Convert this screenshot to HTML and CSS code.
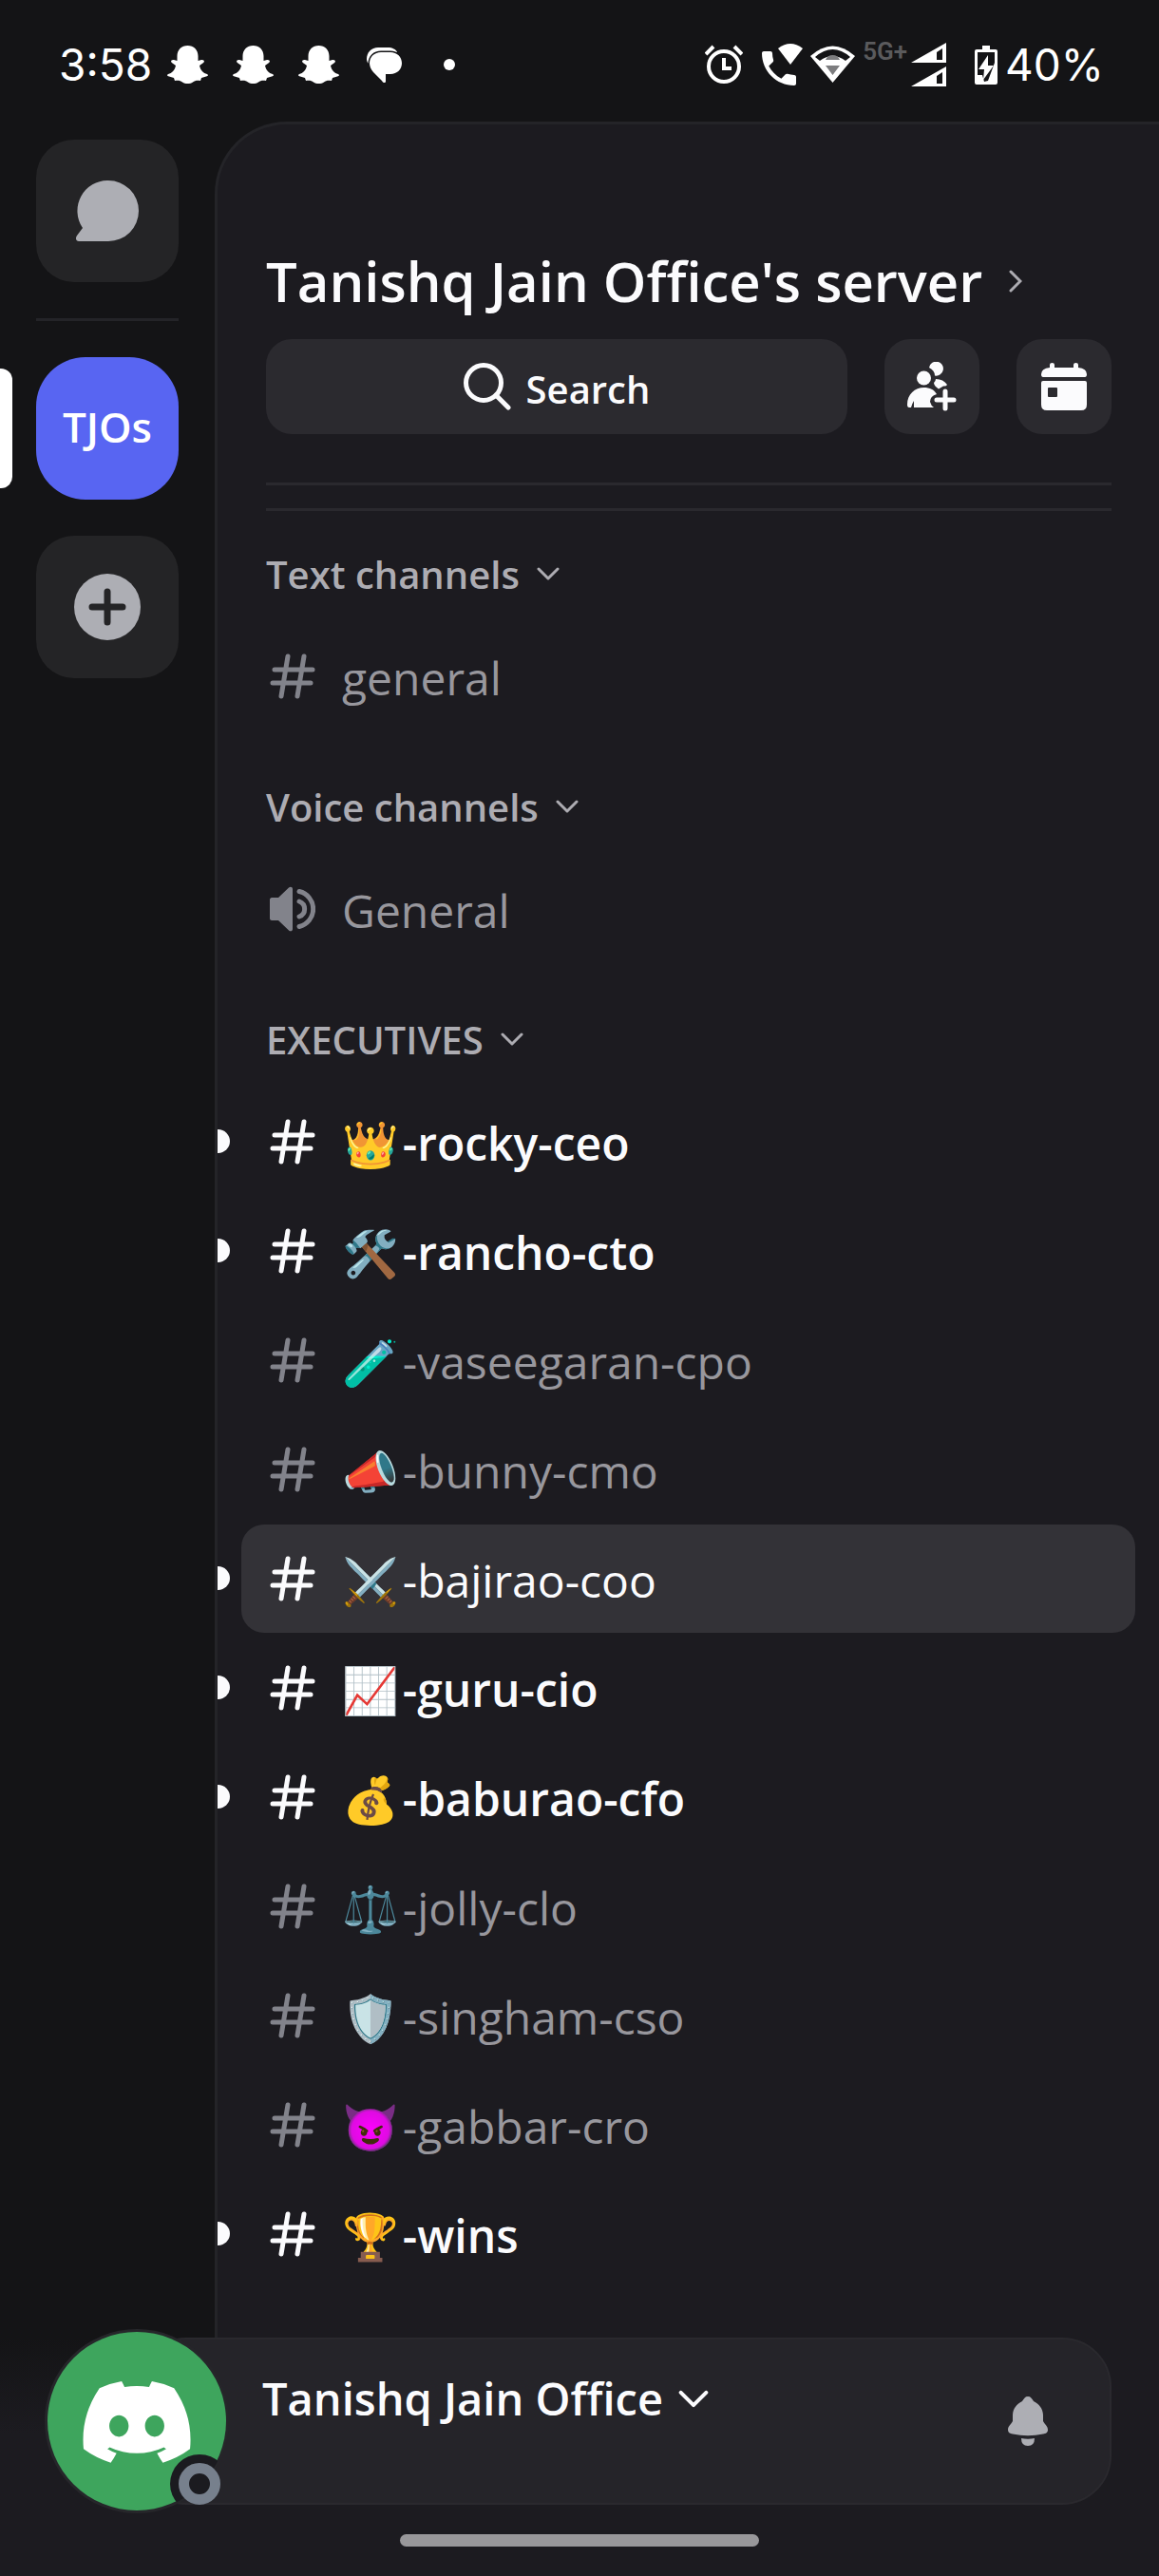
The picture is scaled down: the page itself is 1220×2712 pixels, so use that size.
FILE: index.html
```html
<!DOCTYPE html>
<html lang="en">
<head>
    <meta charset="UTF-8">
    <meta name="viewport" content="width=device-width, initial-scale=1.0">
    <title>Tanishq Jain Office's server</title>
    <link rel="stylesheet" href="styles.css">
</head>
<body>
    <!-- shared icons -->
    <svg class="defs" aria-hidden="true">
        <symbol id="ghost" viewBox="0 0 43 40">
            <path fill="currentColor" d="M21.5 0C28 0 32.5 4.500 32.5 11V16L36 15C39 14.5 40 17 37.5 18.5L34 21C35 26 38 29 42 30C43.5 31 43 32 41 32.500L36 34L35 37C31 36.5 29 37 27 38.500C24 40.500 19 40.500 16 38.500C14 37 12 36.500 8 37L7 34L2 32.500C0 32 -.5 31 1 30C5 29 8 26 9 21L5.500 18.500C3 17 4 14.500 7 15L10.500 16V11C10.500 4.500 15 0 21.500 0z"/>
        </symbol>
        <symbol id="hash" viewBox="0 0 48 48">
            <path fill="none" stroke="currentColor" stroke-width="5" stroke-linecap="round" d="M19 3L12 45M36 3L29 45M5 17H45M3 31H43"/>
        </symbol>
        <symbol id="speaker" viewBox="0 0 48 48">
            <path fill="currentColor" d="M2 12H9L20 1.500C21.500 0 24 .5 24 3V45C24 47.500 21.500 48 20 46.500L9 36H2C1 36 0 35 0 34V14C0 13 1 12 2 12z"/>
            <path fill="none" stroke="currentColor" stroke-width="5" stroke-linecap="round" d="M31 5.500A19 19 0 0 1 31 42.500M31 16A8.500 8.500 0 0 1 31 32"/>
        </symbol>
        <symbol id="chevron" viewBox="0 0 24 14">
            <path fill="none" stroke="currentColor" stroke-width="3" stroke-linecap="round" stroke-linejoin="round" d="M2 2L12 12L22 2"/>
        </symbol>
    </svg>

    <header class="status-bar">
        <div class="status-left">
            <span class="clock">3:58</span>
            <svg class="ghost" width="43" height="40"><use href="#ghost"/></svg>
            <svg class="ghost" width="43" height="40"><use href="#ghost"/></svg>
            <svg class="ghost" width="43" height="40"><use href="#ghost"/></svg>
            <svg width="40" height="37" viewBox="-3 0 40 37">
                <path fill="#fff" d="M12 0H22C27 0 31 2 32 5L4 17C1 18 0 14 0 12C0 5 5 0 12 0z"/>
                <path fill="#fff" stroke="#141416" stroke-width="3" paint-order="stroke" d="M15 5H25C32 5 37 10 37 16.500S32 28 25 28H20V36C19 38 17 37 16 35L7 26C4 23 3 19 3 16.500C3 10 8 5 15 5z"/>
            </svg>
            <span class="more-dot"></span>
        </div>
        <div class="status-right">
            <svg width="40" height="42" viewBox="0 0 40 42" fill="none" stroke="#fff" stroke-width="4">
                <circle cx="20" cy="23" r="16"/>
                <path d="M1 10L9 2M39 10L31 2M20 14V25H28"/>
            </svg>
            <svg width="43" height="44" viewBox="0 0 43 44" fill="#fff">
                <path transform="translate(-6 2) scale(2)" d="M20 15.500c-1.250 0-2.450-.2-3.570-.57-.1-.03-.21-.05-.31-.05-.26 0-.51.1-.71.290l-2.200 2.200c-2.830-1.440-5.150-3.750-6.590-6.580l2.200-2.210c.28-.27.36-.66.25-1.010C8.700 6.450 8.500 5.250 8.500 4c0-.55-.45-1-1-1H4c-.55 0-1 .45-1 1 0 9.390 7.610 17 17 17 .55 0 1-.45 1-1v-3.500c0-.55-.45-1-1-1z"/>
                <path d="M17 5Q30-5 43 5L30 22z"/>
            </svg>
            <svg width="47" height="40" viewBox="0 0 47 40">
                <path fill="#fff" d="M0 11Q23.500-10 47 11L23.500 39z"/>
                <path fill="#141416" d="M5 12Q23.500-4 42 12L37 16Q23.500 6 10 16z"/>
                <path fill="#7d7d7f" d="M16 15Q18 10 23.500 10Q29 10 31 15zM16 21H31L23.500 31z"/>
            </svg>
            <span class="network">5G+</span>
            <svg width="37" height="46" viewBox="0 0 37 46">
                <path fill="#fff" fill-rule="evenodd" d="M0 21L37 0V21zM27 10V18H33V6zM0 46L37 25V46zM27 35V43H33V31z"/>
            </svg>
            <svg class="battery" width="24" height="41" viewBox="0 0 24 41">
                <path fill="#fff" d="M8 0H16V4H22Q24 4 24 6V39Q24 41 22 41H2Q0 41 0 39V6Q0 4 2 4H8z"/>
                <path fill="#141416" d="M3 7H21V18L14 37L10 38L8 31H3z"/>
                <path fill="#fff" d="M14 10L4 25H10L9 36L20 21H14z"/>
            </svg>
            <span class="clock">40%</span>
        </div>
    </header>

    <main class="app">
        <nav class="rail" aria-label="Servers">
            <button class="tile" aria-label="Direct messages">
                <svg width="66" height="64" viewBox="0 0 66 64"><path fill="currentColor" d="M34 0A32 32 0 0 1 34 64H3C0 64-1 61 1 58L7 50A32 32 0 0 1 34 0z"/></svg>
            </button>
            <hr class="rail-line">
            <div class="current">
                <button class="tile tile-server">TJOs</button>
            </div>
            <button class="tile" aria-label="Add a server">
                <svg width="70" height="70" viewBox="0 0 70 70">
                    <circle cx="35" cy="35" r="35" fill="currentColor"/>
                    <path fill="none" stroke="#242426" stroke-width="7" stroke-linecap="round" d="M35 19V51M19 35H51"/>
                </svg>
            </button>
        </nav>

        <section class="panel">
            <div class="panel-head">
                <h1 class="server-name">
                    <span>Tanishq Jain Office's server</span>
                    <svg width="14" height="24" viewBox="0 0 14 24"><path fill="none" stroke="currentColor" stroke-width="3" stroke-linecap="round" d="M2 2L12 12L2 22"/></svg>
                </h1>
                <div class="tools">
                    <button class="tool search">
                        <svg width="50" height="50" viewBox="0 0 50 50"><g fill="none" stroke="currentColor" stroke-width="5" stroke-linecap="round"><circle cx="21" cy="21" r="18.500"/><path d="M34 34L47 47"/></g></svg>
                        <span>Search</span>
                    </button>
                    <button class="tool square" aria-label="Invite people">
                        <svg width="52" height="52" viewBox="0 0 52 52" fill="currentColor">
                            <circle cx="17.500" cy="17" r="7.500"/>
                            <path d="M23 6A7.500 7.500 0 1 1 29 14.500Q29 9 23 6zM30 18Q38 18 42 24Q41 26 38 25.500L33 28.500Q28 25 28 22Q30 20 30 18z"/>
                            <path d="M0 45C0 34 8 27 17.500 27C24 27 28 29 31 34Q24 36 24 42Q25 46 28 48H7V41Q5 44 4 48H2Q0 48 0 45z"/>
                            <path fill="none" stroke="currentColor" stroke-width="5" stroke-linecap="round" d="M40 31V49M31 40H49"/>
                        </svg>
                    </button>
                    <button class="tool square" aria-label="Events">
                        <svg width="48" height="50" viewBox="0 0 48 50" fill="currentColor">
                            <path d="M9 5V2Q9 0 11.500 0T14 2V5H34V2Q34 0 36.500 0T39 2V5Q48 6 48 12Q48 15 46 15H2Q0 15 0 12Q0 6 9 5z"/>
                            <path fill-rule="evenodd" d="M2 19H46Q48 19 48 21V44Q48 50 42 50H6Q0 50 0 44V21Q0 19 2 19zM8 26Q7 26 7 27V35Q7 36 8 36H16Q17 36 17 35V27Q17 26 16 26z"/>
                        </svg>
                    </button>
                </div>
                <hr class="line">
                <hr class="line">
            </div>

            <div class="group">
                <h2 class="group-name">Text channels <svg width="24" height="14"><use href="#chevron"/></svg></h2>
                <ul class="channels">
                    <li><a class="channel" href="#general"><svg class="icon"><use href="#hash"/></svg><span>general</span></a></li>
                </ul>
            </div>

            <div class="group">
                <h2 class="group-name">Voice channels <svg width="24" height="14"><use href="#chevron"/></svg></h2>
                <ul class="channels">
                    <li><a class="channel" href="#voice"><svg class="icon"><use href="#speaker"/></svg><span>General</span></a></li>
                </ul>
            </div>

            <div class="group">
                <h2 class="group-name">EXECUTIVES <svg width="24" height="14"><use href="#chevron"/></svg></h2>
                <ul class="channels">
                    <li class="unread"><a class="channel" href="#ceo"><svg class="icon"><use href="#hash"/></svg><span><span class="emoji">👑</span>-rocky-ceo</span></a></li>
                    <li class="unread"><a class="channel" href="#cto"><svg class="icon"><use href="#hash"/></svg><span><span class="emoji">🛠️</span>-rancho-cto</span></a></li>
                    <li><a class="channel" href="#cpo"><svg class="icon"><use href="#hash"/></svg><span><span class="emoji">🧪</span>-vaseegaran-cpo</span></a></li>
                    <li><a class="channel" href="#cmo"><svg class="icon"><use href="#hash"/></svg><span><span class="emoji">📣</span>-bunny-cmo</span></a></li>
                    <li class="unread selected"><a class="channel" href="#coo"><svg class="icon"><use href="#hash"/></svg><span><span class="emoji">⚔️</span>-bajirao-coo</span></a></li>
                    <li class="unread"><a class="channel" href="#cio"><svg class="icon"><use href="#hash"/></svg><span><span class="emoji">📈</span>-guru-cio</span></a></li>
                    <li class="unread"><a class="channel" href="#cfo"><svg class="icon"><use href="#hash"/></svg><span><span class="emoji">💰</span>-baburao-cfo</span></a></li>
                    <li><a class="channel" href="#clo"><svg class="icon"><use href="#hash"/></svg><span><span class="emoji">⚖️</span>-jolly-clo</span></a></li>
                    <li><a class="channel" href="#cso"><svg class="icon"><use href="#hash"/></svg><span><span class="emoji">🛡️</span>-singham-cso</span></a></li>
                    <li><a class="channel" href="#cro"><svg class="icon"><use href="#hash"/></svg><span><span class="emoji">😈</span>-gabbar-cro</span></a></li>
                    <li class="unread"><a class="channel" href="#wins"><svg class="icon"><use href="#hash"/></svg><span><span class="emoji">🏆</span>-wins</span></a></li>
                </ul>
            </div>
        </section>
    </main>

    <footer class="bottom">
        <div class="user">
            <svg class="avatar" width="188" height="188" viewBox="0 0 188 188">
                <clipPath id="round"><circle cx="94" cy="94" r="95"/></clipPath>
                <circle cx="94" cy="94" r="97" fill="#26262a"/>
                <circle cx="94" cy="94" r="94" fill="#3ea55d"/>
                <path transform="translate(37.500 52) scale(.889)" fill="#fff" d="M107.7,8.07A105.15,105.15,0,0,0,81.47,0a72.06,72.06,0,0,0-3.36,6.83A97.68,97.68,0,0,0,49,6.83,72.37,72.37,0,0,0,45.64,0,105.89,105.89,0,0,0,19.39,8.09C2.79,32.65-1.71,56.6.54,80.21h0A105.73,105.73,0,0,0,32.71,96.36,77.7,77.7,0,0,0,39.6,85.25a68.42,68.42,0,0,1-10.85-5.18c.91-.66,1.8-1.34,2.66-2a75.57,75.57,0,0,0,64.32,0c.87.71,1.76,1.39,2.66,2a68.68,68.68,0,0,1-10.87,5.19,77,77,0,0,0,6.89,11.1A105.25,105.25,0,0,0,126.6,80.22h0C129.24,52.84,122.09,29.11,107.7,8.07ZM42.45,65.69C36.18,65.69,31,60,31,53s5-12.74,11.43-12.74S54,46,53.89,53,48.84,65.69,42.45,65.69Zm42.24,0C78.41,65.69,73.25,60,73.25,53s5-12.74,11.44-12.74S96.23,46,96.12,53,91.08,65.69,84.69,65.69Z"/>
                <circle cx="160" cy="160" r="31" fill="#1b1b20" clip-path="url(#round)"/>
                <circle cx="160" cy="160" r="16.500" fill="#1b1b20" stroke="#77808d" stroke-width="11"/>
            </svg>
            <div class="user-card">
                <button class="user-name">Tanishq Jain Office <svg width="32" height="19"><use href="#chevron"/></svg></button>
                <button class="bell" aria-label="Notifications">
                    <svg width="42" height="52" viewBox="0 0 42 52" fill="currentColor">
                        <path d="M21 0C24 0 25 2 27 5C33 8 37 13 37 20V26C39 30 42 31 42 35C42 38 40 39 37 39.500Q21 43 5 39.500C2 39 0 38 0 35C0 31 3 30 5 26V20C5 13 9 8 15 5C17 2 18 0 21 0z"/>
                        <path d="M14 44Q21 45.500 28 44Q28 52 21 52T14 44z"/>
                    </svg>
                </button>
            </div>
        </div>
        <div class="home-bar"></div>
    </footer>
</body>
</html>
```
FILE: styles.css
```css
* {
    box-sizing: border-box;
}
body {
    margin: 0;
    min-height: 100vh;
    display: flex;
    flex-direction: column;
    background-color: #141416;
    color: #fbfbfd;
    font-family: 'Open Sans', 'Noto Sans', 'Noto Color Emoji', sans-serif;
    font-size: 48px;
}
button {
    border: none;
    padding: 0;
    background: none;
    color: inherit;
    font-family: inherit;
    cursor: pointer;
}
svg {
    display: block;
    flex: none;
}
.defs {
    position: absolute;
    width: 0;
    height: 0;
}
hr {
    border: none;
    margin: 0;
    height: 3px;
}

/* status bar */
.status-bar {
    height: 128px;
    padding: 8px 58px 0 62px;
    display: flex;
    align-items: center;
    justify-content: space-between;
    color: #fff;
}
.status-left,
.status-right {
    display: flex;
    align-items: center;
}
.clock {
    font-family: Inter, sans-serif;
    font-size: 46px;
    line-height: 56px;
}
.status-left {
    gap: 26px;
}
.status-left .clock {
    margin-right: -10px;
}
.more-dot {
    width: 12px;
    height: 12px;
    margin-left: 18px;
    border-radius: 50%;
    background-color: #fff;
}
.status-right {
    gap: 8px;
}
.status-right svg:first-child {
    margin-right: 12px;
}
.network {
    align-self: flex-start;
    margin-right: -4px;
    font-family: Roboto, sans-serif;
    font-size: 26px;
    font-weight: 600;
    line-height: 28px;
    color: #5a5a5c;
}
.battery {
    margin-left: 22px;
}

/* server rail */
.app {
    flex: 1;
    display: flex;
}
.rail {
    width: 226px;
    flex: none;
    padding: 19px 38px;
    display: flex;
    flex-direction: column;
    gap: 38px;
}
.tile {
    width: 150px;
    height: 150px;
    display: flex;
    align-items: center;
    justify-content: center;
    border-radius: 40px;
    background-color: #242426;
    color: #adaeb4;
}
.tile-server {
    padding-bottom: 4px;
    border-radius: 52px;
    background-color: #5865f2;
    color: #fff;
    font-size: 44px;
    font-weight: 600;
}
.rail-line {
    background-color: #242428;
}
.current {
    position: relative;
}
.current::before {
    content: "";
    position: absolute;
    left: -38px;
    top: 12px;
    width: 13px;
    height: 126px;
    border-radius: 0 12px 12px 0;
    background-color: #fff;
}

/* channel panel */
.panel {
    flex: 1;
    min-width: 0;
    border-top: 3px solid #242428;
    border-left: 3px solid #242428;
    border-top-left-radius: 76px;
    background-color: #1c1b20;
}
.panel-head {
    padding: 127px 50px 16px 51px;
}
.server-name {
    display: flex;
    align-items: center;
    gap: 28px;
    margin: 0 0 23px;
    font-size: 58px;
    font-weight: 600;
    line-height: 76px;
}
.server-name svg {
    color: #adacb2;
}
.tools {
    display: flex;
    gap: 39px;
    margin-bottom: 51px;
}
.tool {
    height: 100px;
    display: flex;
    align-items: center;
    justify-content: center;
    gap: 16px;
    border-radius: 27px;
    background-color: #2b2a2f;
    font-size: 40px;
    font-weight: 600;
}
.search {
    flex: 1;
}
.search span {
    padding-top: 4px;
}
.square {
    width: 100px;
}
.line {
    background-color: #2a292e;
}
.line + .line {
    margin-top: 24px;
}
.group + .group {
    margin-top: 30px;
}
.group-name {
    display: flex;
    align-items: center;
    gap: 18px;
    height: 100px;
    margin: 0;
    padding-left: 51px;
    color: #adacb2;
    font-size: 40px;
    font-weight: 600;
}
.channels {
    list-style: none;
    margin: 0;
    padding: 0;
}
.channels li {
    display: flex;
    align-items: center;
    height: 115px;
    padding: 0 25px;
}
.channels .unread {
    padding-left: 0;
}
.unread::before {
    content: "";
    width: 13px;
    height: 25px;
    margin-right: 12px;
    border-radius: 0 13px 13px 0;
    background-color: #fbfbfd;
}
.channel {
    flex: 1;
    height: 114px;
    display: flex;
    align-items: center;
    gap: 28px;
    padding-left: 30px;
    border-radius: 24px;
    color: #98979d;
    text-decoration: none;
    line-height: 64px;
}
.channel > span {
    padding-top: 5px;
}
.icon {
    width: 48px;
    height: 48px;
    color: #82838b;
}
.unread .channel {
    color: #fbfbfd;
    font-weight: 600;
}
.unread .icon {
    color: #fbfbfd;
}
.selected .channel {
    background-color: #333237;
    font-weight: 500;
}
.emoji {
    margin-right: 4px;
    font-weight: 400;
}

/* user card */
.bottom {
    background: linear-gradient(#141416, #1c1b20 100px);
    background-color: #1c1b20;
    background-size: 226px 100%;
    background-repeat: no-repeat;
    padding: 0 50px 31px;
}
.user {
    display: flex;
    align-items: center;
    height: 176px;
}
.avatar {
    position: relative;
    overflow: visible;
}
.user-card {
    flex: 1;
    height: 176px;
    margin-left: -94px;
    padding: 0 65px 0 130px;
    display: flex;
    align-items: center;
    justify-content: space-between;
    border: 2px solid #2a292e;
    border-radius: 52px;
    background-color: #252429;
}
.user-name {
    display: flex;
    align-items: center;
    gap: 16px;
    padding-bottom: 48px;
    font-size: 47px;
    font-weight: 600;
}
.bell {
    color: #adaeb4;
}
.home-bar {
    width: 378px;
    height: 13px;
    margin: 31px auto 0;
    border-radius: 7px;
    background-color: #98979a;
}
```
